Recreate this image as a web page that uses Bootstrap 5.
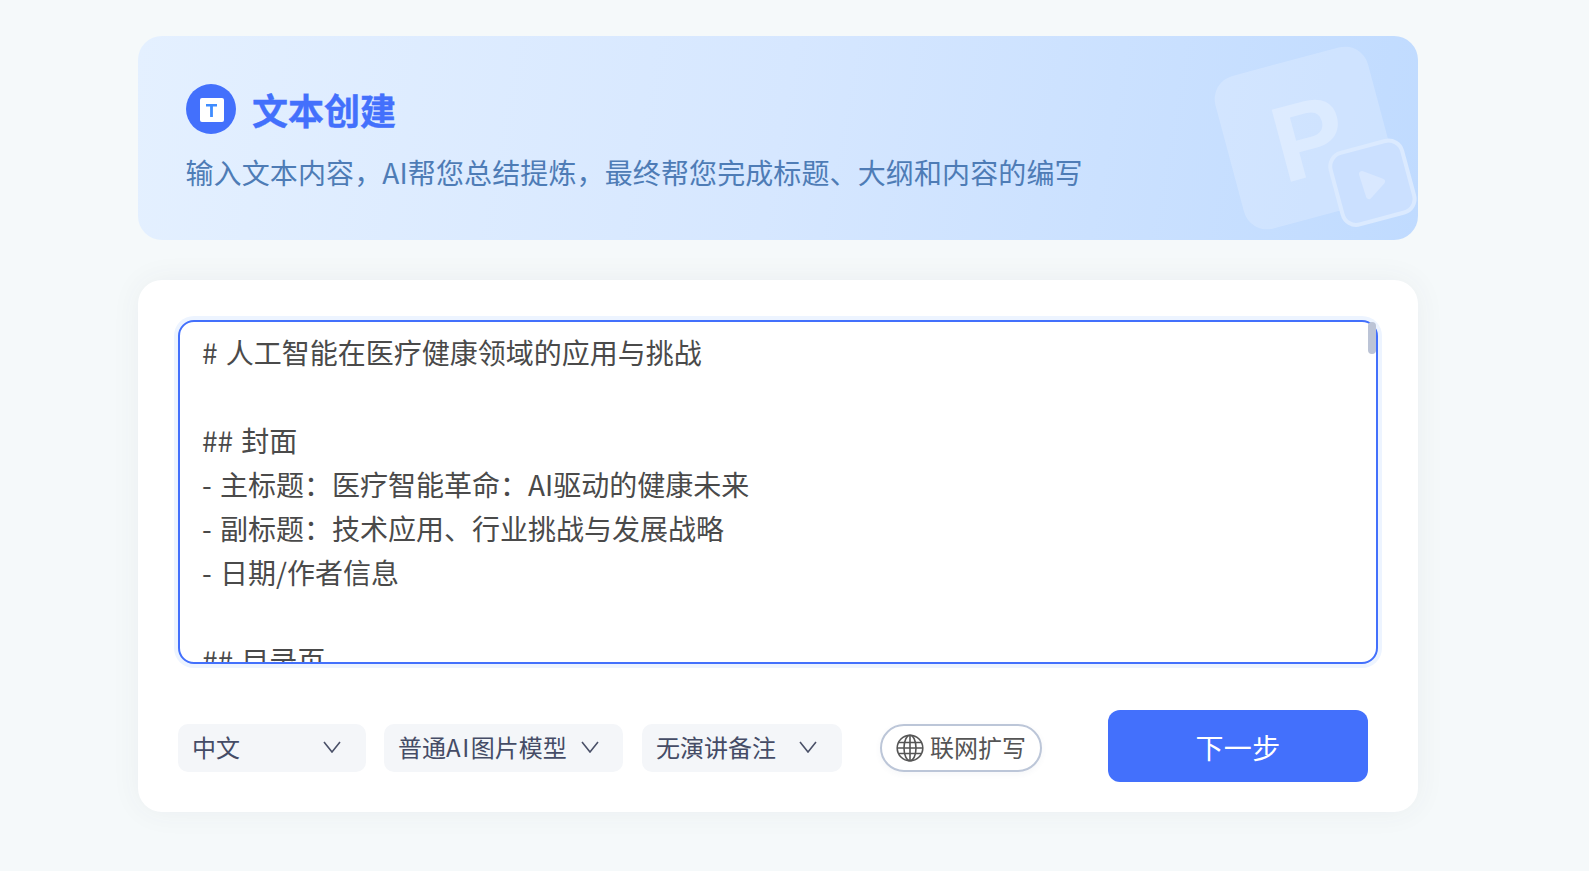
<!DOCTYPE html>
<html lang="zh-CN">
<head>
<meta charset="utf-8">
<title>文本创建</title>
<link rel="stylesheet" href="https://cdn.jsdelivr.net/npm/bootstrap@5.3.0/dist/css/bootstrap.min.css">
<style>
html,body{height:100%}
body{background:#f5f9fa;font-family:"Noto Sans CJK SC","Noto Sans",sans-serif;overflow:hidden}
.page-wrap{width:1280px;margin-left:138px;padding-top:36px}
.hero{height:204px;border-radius:24px;background:linear-gradient(100deg,#e4f0ff 0%,#d6e7ff 50%,#c0dbff 100%);padding:48px 48px 0 47.5px;overflow:hidden}
.hero-deco{position:absolute;left:0;top:0;pointer-events:none}
.hero-icon{width:50px;height:50px;border-radius:50%;background:#4370fc;margin-left:.5px}
.hero-title{font-size:36px;font-weight:700;color:#4370fc;line-height:50px;margin:0 0 0 16px;-webkit-text-stroke:.4px #4370fc}
.hero-sub{font-size:28px;line-height:40px;color:#4e7cb6;margin:18px 0 0;letter-spacing:.12px}
.main-panel{margin-top:40px;height:532px;background:#fff;border-radius:24px;padding:40px;box-shadow:0 0 30px rgba(60,70,80,.06)}
.prompt-wrap{width:1200px;height:344px}
.prompt-box.form-control{display:block;width:1200px;height:344px;border:2px solid #4370fc;border-radius:16px;padding:8px 14px 10px 22px;font-size:28px;line-height:44px;color:#4a4a4a;word-spacing:2px;box-shadow:0 0 0 4px #edf4ff;resize:none;overflow:hidden;font-family:inherit}
.prompt-thumb{position:absolute;top:2px;right:2px;width:8px;height:32px;background:#bcc4d6;border-radius:4px}
.tool-row{margin-top:46px;height:72px;padding-right:10px}
.pick{height:48px;margin-top:4px;padding-bottom:2px;border-radius:10px;background:#f4f6f9;color:#454c66;font-size:24px;line-height:44px;white-space:nowrap}
.pick-lang{width:188px;padding-left:14px;padding-right:25px}
.pick-model{width:239px;padding-left:14px;padding-right:24px;margin-left:18px}
.pick-note{width:200px;padding-left:14px;padding-right:25px;margin-left:19px}
.pick svg{width:18px;height:12px;flex:none}
.ai-wide{letter-spacing:1.6px}
.web-toggle{width:162px;height:48px;margin-top:4px;margin-left:38px;border:2px solid #bcc6d8;border-radius:24px;background:#fff;color:#555;font-size:24px;line-height:40px;box-shadow:0 2px 6px rgba(60,80,110,.05);white-space:nowrap}
.web-toggle svg{width:28px;height:28px;margin-right:6px;flex:none}
.web-toggle span{margin-bottom:2px}
.next-btn.btn{width:260px;height:72px;border-radius:12px;background:#4370fc;border:0;color:#fff;font-size:28px;line-height:74px;padding:0;letter-spacing:.4px}
</style>
</head>
<body>
<div class="page-wrap">
  <section class="hero position-relative">
    <svg class="hero-deco" width="1280" height="204" viewBox="138 36 1280 204" aria-hidden="true">
      <g transform="rotate(-15 1306 138)">
        <rect x="1227" y="59" width="158" height="158" rx="24" fill="#fff" fill-opacity=".2"/>
      </g>
      <text transform="translate(1284 183.5) rotate(-15)" x="0" y="0" font-family="Liberation Sans" font-weight="700" font-size="108" fill="#fff" fill-opacity=".28">P</text>
      <g transform="rotate(-15 1372.4 182.7)">
        <rect x="1335.4" y="145.7" width="74" height="74" rx="14" fill="#cbe0ff" stroke="#dbeaff" stroke-width="4"/>
      </g>
      <path d="M1362 174L1382 181.5L1369 196Z" fill="#d9e8ff" stroke="#d9e8ff" stroke-width="6" stroke-linejoin="round"/>
    </svg>
    <div class="d-flex align-items-center position-relative">
      <div class="hero-icon d-flex align-items-center justify-content-center flex-shrink-0">
        <svg width="26" height="26" viewBox="0 0 26 26" aria-hidden="true">
          <rect x="2" y="2" width="24" height="24" rx="2" fill="#fff"/>
          <path d="M8 8H19V10.6H14.9V21H12.1V10.6H8Z" fill="#3f8cff"/>
        </svg>
      </div>
      <h1 class="hero-title">文本创建</h1>
    </div>
    <p class="hero-sub position-relative">输入文本内容，AI帮您总结提炼，最终帮您完成标题、大纲和内容的编写</p>
  </section>

  <section class="main-panel">
    <div class="prompt-wrap position-relative">
    <textarea class="prompt-box form-control" spellcheck="false"># 人工智能在医疗健康领域的应用与挑战

## 封面
- 主标题：医疗智能革命：AI驱动的健康未来
- 副标题：技术应用、行业挑战与发展战略
- 日期/作者信息

## 目录页
1. 行业背景与发展现状
2. 核心应用场景
3. 技术原理与架构
4. 典型案例分析
5. 面临的主要挑战
6. 未来发展趋势</textarea>
    <div class="prompt-thumb"></div>
    </div>
    <div class="tool-row d-flex align-items-center">
      <div class="pick pick-lang d-flex align-items-center justify-content-between"><span>中文</span>
        <svg viewBox="0 0 18 12" fill="none" stroke="#4a5068" stroke-width="1.6" aria-hidden="true"><path d="M1 1L9 11L17 1"/></svg></div>
      <div class="pick pick-model d-flex align-items-center justify-content-between"><span>普通<span class="ai-wide">AI</span>图片模型</span>
        <svg viewBox="0 0 18 12" fill="none" stroke="#4a5068" stroke-width="1.6" aria-hidden="true"><path d="M1 1L9 11L17 1"/></svg></div>
      <div class="pick pick-note d-flex align-items-center justify-content-between"><span>无演讲备注</span>
        <svg viewBox="0 0 18 12" fill="none" stroke="#4a5068" stroke-width="1.6" aria-hidden="true"><path d="M1 1L9 11L17 1"/></svg></div>
      <div class="web-toggle d-flex align-items-center justify-content-center">
        <svg viewBox="0 0 28 28" fill="none" stroke="#555" stroke-width="1.6" aria-hidden="true"><circle cx="14" cy="14" r="12.8"/><ellipse cx="14" cy="14" rx="6" ry="12.8"/><path d="M14 1.2V26.8M1.2 14H26.8M3 8.5H25M3 19.5H25"/></svg>
        <span>联网扩写</span>
      </div>
      <button type="button" class="next-btn btn ms-auto">下一步</button>
    </div>
  </section>
</div>
<script src="https://cdn.jsdelivr.net/npm/bootstrap@5.3.0/dist/js/bootstrap.bundle.min.js"></script>
</body>
</html>
